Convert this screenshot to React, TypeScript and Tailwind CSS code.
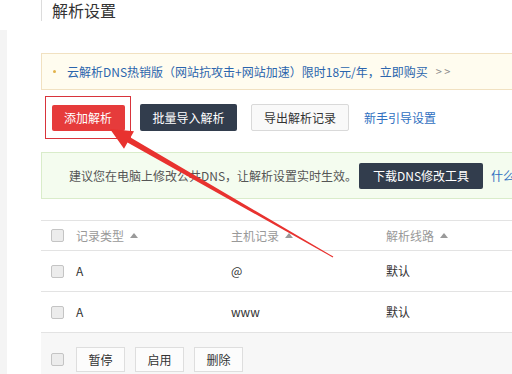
import React from 'react';

const rows = [
  { type: 'A', host: '@', line: '默认' },
  { type: 'A', host: 'www', line: '默认' },
];

function Checkbox() {
  return <span className="inline-block w-[13px] h-[13px] rounded-[2px] border border-[#c4c4c4] bg-[#ececec]" />;
}

function Caret() {
  return (
    <span className="inline-block ml-[6px] w-0 h-0 border-x-[4px] border-x-transparent border-b-[5px] border-b-[#9a9a9a]" />
  );
}

export default function App() {
  return (
    <div className="relative w-[512px] h-[374px] overflow-hidden bg-white flex text-[12px] text-[#333] font-['Microsoft_YaHei','Noto_Sans_CJK_SC',sans-serif]">
      {/* left edge */}
      <div className="w-[41px] shrink-0 flex flex-col">
        <div className="h-[30px]" />
        <div className="flex-1 w-[7px] bg-[#f4f4f4]" />
      </div>

      <div className="flex-1 min-w-0 flex flex-col">
        <div className="h-[21px] border-l border-[#dcdcdc] pl-[10px] pt-[1px] text-[16px] leading-[18px] text-[#333]">
          解析设置
        </div>

        {/* promo notice */}
        <div className="mt-[32px] h-[37px] border border-r-0 border-[#f1e1c1] bg-[#fffcef] flex items-center pl-[11px] whitespace-nowrap">
          <span className="w-[3px] h-[3px] rounded-full bg-[#e2b24a]" />
          <span className="ml-[11px] text-[#2b65ad]">云解析DNS热销版（网站抗攻击+网站加速）限时18元/年，立即购买</span>
          <span className="ml-[8px] text-[#8a8a8a] text-[11px]">&gt; &gt;</span>
        </div>

        {/* actions */}
        <div className="mt-[6px] flex items-center whitespace-nowrap">
          <div className="ml-[4px] w-[86px] h-[43px] border border-[#d8343b] flex items-center justify-center">
            <button className="w-[73px] h-[26px] rounded-[2px] bg-[#e63b3b] text-white text-[12px]">添加解析</button>
          </div>
          <button className="ml-[9px] w-[97px] h-[27px] rounded-[2px] bg-[#323d4d] text-white text-[12px]">批量导入解析</button>
          <button className="ml-[14px] w-[98px] h-[27px] rounded-[2px] border border-[#d9d9d9] bg-[#f9f9f9] text-[#333] text-[12px]">导出解析记录</button>
          <span className="ml-[15px] text-[#2f6fc0]">新手引导设置</span>
        </div>

        {/* dns tip */}
        <div className="mt-[13px] h-[47px] border border-r-0 border-[#d9ecca] bg-[#f4fcef] flex items-center pl-[15px] whitespace-nowrap">
          <span className="w-[3px] h-[3px] rounded-full bg-[#c9c85a]" />
          <span className="ml-[12px] w-[290px] shrink-0 text-[#555]">建议您在电脑上修改公共DNS，让解析设置实时生效。</span>
          <button className="w-[124px] h-[26px] shrink-0 rounded-[2px] bg-[#323d4d] text-white text-[12px]">下载DNS修改工具</button>
          <span className="ml-[8px] text-[#2f6fc0]">什么</span>
        </div>

        {/* records table */}
        <div className="mt-[21px] flex flex-col flex-1">
          <div className="h-[31px] border-y border-[#e3e3e3] flex items-center text-[#999] whitespace-nowrap">
            <div className="w-[35px] pl-[10px] flex items-center"><Checkbox /></div>
            <div className="w-[155px] flex items-center">记录类型<Caret /></div>
            <div className="w-[155px] flex items-center">主机记录<Caret /></div>
            <div className="flex items-center">解析线路<Caret /></div>
          </div>
          {rows.map((r, i) => (
            <div key={i} className="h-[41px] border-b border-[#e3e3e3] flex items-center whitespace-nowrap">
              <div className="w-[35px] pl-[10px] flex items-center"><Checkbox /></div>
              <div className="w-[155px]">{r.type}</div>
              <div className="w-[155px]">{r.host}</div>
              <div>{r.line}</div>
            </div>
          ))}
          <div className="flex-1 bg-[#f7f7f7] flex items-start pt-[14px] pl-[10px]">
            <div className="h-[25px] flex items-center"><Checkbox /></div>
            <div className="ml-[12px] flex gap-[10px]">
              {['暂停', '启用', '删除'].map((b) => (
                <button key={b} className="w-[49px] h-[25px] border border-[#dedede] bg-[#fcfcfc] text-[#333] text-[12px]">{b}</button>
              ))}
            </div>
          </div>
        </div>
      </div>

      {/* annotation arrow */}
      <svg className="absolute inset-0 pointer-events-none" width="512" height="374" viewBox="0 0 512 374">
        <polygon
          fill="#e8322f"
          points="110,129 134,131.3 130.5,137.4 333.3,256.6 332.7,257.4 127.5,142.6 124,148.7"
        />
      </svg>
    </div>
  );
}
